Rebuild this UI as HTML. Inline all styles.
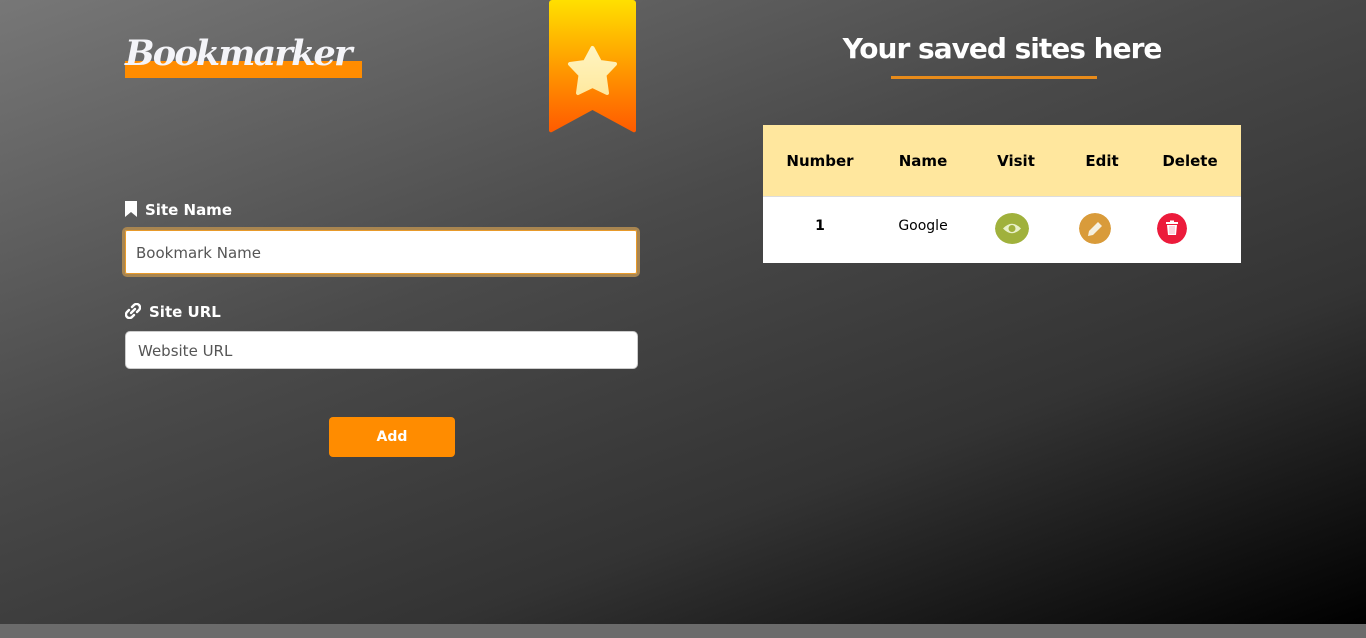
<!DOCTYPE html>
<html><head><meta charset="utf-8">
<style>
*{box-sizing:border-box;margin:0;padding:0}
html,body{width:1366px;height:638px;overflow:hidden;background:#6b6b6b}
.main{position:absolute;left:0;top:0;width:1366px;height:624px;background:linear-gradient(160deg,#777 0%,#4a4a4a 40%,#333 70%,#000 100%);font-family:"Liberation Sans",sans-serif}
.logo{position:absolute;left:125px;top:32px;font-family:"DejaVu Serif","Liberation Serif",serif;font-style:italic;font-weight:bold;font-size:35px;color:#f4f4f8;letter-spacing:-1.8px;line-height:44px}
.logo .u{position:absolute;left:0;top:29px;width:237px;height:17px;background:#ff8c00;z-index:0}
.logo span.t{position:relative;z-index:1}
.ribbon{position:absolute;left:549px;top:0}
.title{position:absolute;left:763px;width:478px;top:32px;text-align:center;color:#fff;font-family:"DejaVu Sans",sans-serif;font-weight:bold;font-size:28px;letter-spacing:-1px}
.title .line{position:absolute;left:128px;top:44px;width:206px;height:3px;background:#e88b1a}
.table{position:absolute;left:763px;top:125px;width:478px;height:138px;background:#fff}
.thead{height:72px;background:#ffe79e;border-bottom:1px solid #ddd;position:relative}
.cell{position:absolute;transform:translateX(-50%);font-family:"DejaVu Sans",sans-serif;font-weight:bold;font-size:15px;color:#000}
.thead .cell{top:27px}
.row .cell{top:21px;font-weight:normal;font-size:14px}
.circ{position:absolute;width:34px;height:31px;border-radius:50%;top:88px}
label{position:absolute;color:#fff;font-weight:bold;font-size:15px;font-family:"DejaVu Sans",sans-serif}
.in{position:absolute;background:#fff;border-radius:5px;color:#555;font-size:15px;font-family:"DejaVu Sans",sans-serif}
.btn{position:absolute;left:329px;top:417px;width:126px;height:40px;background:#ff8c00;border-radius:4px;color:#fff;font-weight:bold;font-size:14px;text-align:center;line-height:40px;font-family:"DejaVu Sans",sans-serif}
</style></head><body>
<div class="main">
<div class="logo"><div class="u"></div><span class="t">Bookmarker</span></div>
<svg class="ribbon" width="87" height="134" viewBox="0 0 87 134">
<defs><linearGradient id="g" x1="0" y1="0" x2="0" y2="1"><stop offset="0" stop-color="#ffe000"/><stop offset="0.55" stop-color="#ff9500"/><stop offset="1" stop-color="#ff5a00"/></linearGradient>
<linearGradient id="s" x1="0" y1="0" x2="0" y2="1"><stop offset="0" stop-color="#fff4c0"/><stop offset="1" stop-color="#ffe9a0"/></linearGradient></defs>
<path d="M3 0H84a3 3 0 0 1 3 3V130a2 2 0 0 1-3 2L43.5 110 3 132a2 2 0 0 1-3-2V3a3 3 0 0 1 3-3z" fill="url(#g)"/>
<path d="M43.5 48 L51 62 L66 64 L55.5 75 L58 93 L43.5 86 L29 93 L31.5 75 L21 64 L36 62Z" fill="url(#s)" stroke="url(#s)" stroke-width="4" stroke-linejoin="round"/>
</svg>
<div class="title">Your saved sites here<div class="line"></div></div>
<div class="table">
<div class="thead">
<div class="cell" style="left:57px">Number</div>
<div class="cell" style="left:160px">Name</div>
<div class="cell" style="left:253px">Visit</div>
<div class="cell" style="left:339px">Edit</div>
<div class="cell" style="left:427px">Delete</div>
</div>
<div class="row" style="position:relative">
<div class="cell" style="left:57px;font-weight:bold">1</div>
<div class="cell" style="left:160px">Google</div>
</div>
<svg class="circ" style="left:232px" viewBox="0 0 34 31"><ellipse cx="17" cy="15.5" rx="17" ry="15.5" fill="#a0b13c"/><path d="M8 15.5Q17 6 26 15.5Q17 25 8 15.5Z" fill="#e8f0c8"/><circle cx="17" cy="15.5" r="3.5" fill="#a0b13c"/></svg>
<svg class="circ" style="left:316px;width:32px" viewBox="0 0 32 31"><ellipse cx="16" cy="15.5" rx="16" ry="15.5" fill="#d99b3a"/><path d="M9 23l1-5 9-9 4 4-9 9z" fill="#f5f0e0"/></svg>
<svg class="circ" style="left:394px;width:30px" viewBox="0 0 30 31"><ellipse cx="15" cy="15.5" rx="15" ry="15.5" fill="#ec1b3b"/><rect x="9" y="9" width="12" height="2" fill="#fff"/><rect x="13" y="7.5" width="4" height="2" fill="#fff"/><path d="M10 12h10l-1 10h-8z" fill="#fff"/><path d="M13 13v8M15 13v8M17 13v8" stroke="#f59ab0" stroke-width="0.8"/></svg>
</div>
<svg style="position:absolute;left:125px;top:201px" width="12" height="16" viewBox="0 0 12 16"><path d="M0 0h12v16L6 11 0 16z" fill="#fff"/></svg>
<label style="left:145px;top:201px">Site Name</label>
<div class="in" style="left:122px;top:227px;width:518px;height:50px;border:3px solid #a88550;padding:14px 0 0 11px;background:#fff;box-shadow:inset 0 0 0 1px #e89a2a">Bookmark Name</div>
<svg style="position:absolute;left:125px;top:303px" width="16" height="16" viewBox="0 0 16 16"><g fill="none" stroke="#fff" stroke-width="2.4" stroke-linecap="round"><path d="M7 4l2-2a3 3 0 0 1 5 5l-2 2"/><path d="M9 12l-2 2a3 3 0 0 1-5-5l2-2"/><path d="M6 10l4-4"/></g></svg>
<label style="left:149px;top:303px">Site URL</label>
<div class="in" style="left:125px;top:331px;width:513px;height:38px;border:1px solid #ccc;padding:10px 0 0 12px">Website URL</div>
<div class="btn">Add</div>
</div>
</body></html>
